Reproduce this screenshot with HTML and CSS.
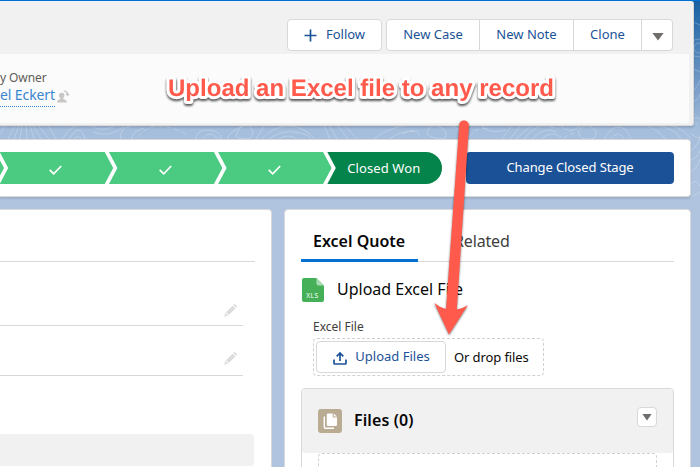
FILE: index.html
```html
<!DOCTYPE html>
<html lang="en">
<head>
<meta charset="utf-8">
<title>Opportunity</title>
<link rel="stylesheet" href="styles.css">
</head>
<body>
<svg class="contours" width="700" height="210" viewBox="0 0 700 210" aria-hidden="true">
  <g fill="none" stroke="#fff" stroke-opacity=".24">
    <path d="M0 134l5-8M8 139l7-14M14 139l5-14M20 139l2-14M27 139l-1-14M34 139l-4-14M41 139l-8-14M49 139l-11-14M56 139l-8-14M63 139q5-12 16-14M69 139q5-8 9-9t7 9M74 139q5-5 7 0M91 125q10 9 27-1M93 132q18 7 33-7M121 139q-3-10 10-13M132 139q0-8 12-11M196 139q1-10 13-9t12 9M203 139q5-10 16 0M227 139q4-10 20-14M236 136q3-10 9-11t8 8q-2 7-9 6t-8-3M256 139l9-14M262 139q10-12 25-13t28 13M269 139q12-9 26-7t16 7M279 139q9-6 18 0M324 125l6 14M329 125l8 14M337 125l11 14M344 125l13 14M374 139q15-12 34-14M389 139q12-9 30-8M428 131q2-8 10-5t8 9-11 3-7-7M453 126l17 12M481 125q8 10 25 5M502 139l10-14M510 139l11-14M516 139l16-14M524 139q15-20 31-11M532 139q12-13 24-7M541 139q10-9 20-2M560 125q10 11 21 0M578 132q5-8 11-6t7 7-6 6-9-2-3-5M604 139q6-11 14-12t13 12M611 139q7-10 13 0M646 125q15 7 19 14M656 125q19 3 25 14M668 125q15 2 23 14"/>
    <path d="M700 39q-10 0-10 9t10 9M700 43q-6 0-6 5t6 5M694 90q4-3 6-10M694 101q5-1 6-7M693 119q4-3 7 0M693 22l7 3M693 69l7 3M691 133q5 6 9 4M691 151q8-7 9-14M691 160q7-2 9-10M691 171q6-2 9-12M691 184q5-6 9 2M691 197l9-5"/>
    <path stroke-dasharray="5 3" d="M138 137q9-12 22-11t26 8M403 135q7-8 17 0M469 137q8-11 18-8M690 115l10 12M563 138l11-5"/>
  </g>
</svg>
<main class="page">
  <header class="record">
    <div class="record-top">
      <button class="btn follow"><svg width="13" height="13" viewBox="0 0 13 13"><path d="M6.5 .5v12M.5 6.5h12" fill="none" stroke="currentColor" stroke-width="1.7"/></svg><span class="t-follow">Follow</span></button>
      <div class="group">
        <button class="btn case">New Case</button>
        <button class="btn note">New Note</button>
        <button class="btn clone">Clone</button>
        <button class="btn more" aria-label="More"><i class="caret"></i></button>
      </div>
    </div>
    <div class="record-fields">
      <div class="field-label">y Owner</div>
      <div class="owner"><a>el Eckert</a><svg width="12" height="13" viewBox="0 0 12 13"><g fill="#c9c7c5"><circle cx="4.7" cy="5.500" r="2.700"/><path d="M3.200 7h3v2l2.700 1.200q.8.4.8 1.200v1.100H.2v-1.100q0-.8.8-1.200L3.200 9z"/></g><path d="M6.700 1.300q3.400-.6 3.900 3.300M9 3.700l1.700 1.600L12 3.600" fill="none" stroke="#c9c7c5" stroke-width="1.300"/></svg></div>
    </div>
  </header>

  <section class="path-card">
    <div class="path">
      <div class="stage"></div>
      <div class="stage"><svg class="check" width="13" height="10" viewBox="0 0 13 10"><path d="M.7 4.800l4 4L12.200 1"/></svg></div>
      <div class="stage"><svg class="check" width="13" height="10" viewBox="0 0 13 10"><path d="M.7 4.800l4 4L12.200 1"/></svg></div>
      <div class="stage"><svg class="check" width="13" height="10" viewBox="0 0 13 10"><path d="M.7 4.800l4 4L12.200 1"/></svg></div>
      <div class="stage won"><span>Closed Won</span></div>
    </div>
    <button class="change"><span>Change Closed Stage</span></button>
  </section>

  <div class="columns">
    <section class="details">
      <div class="tabline"></div>
      <div class="row first"><svg class="pencil" width="13" height="13" viewBox="0 0 13 13"><path d="M.3 12.700l.9-3.700 2.800 2.800zM2 8.300L8.600 1.700l2.800 2.800L4.800 11zM9.300 1l.7-.7q.5-.5 1 0l1.800 1.800q.4.500 0 1l-.7.700z"/></svg></div>
      <div class="row"><svg class="pencil" width="13" height="13" viewBox="0 0 13 13"><path d="M.3 12.700l.9-3.700 2.800 2.800zM2 8.300L8.600 1.700l2.800 2.800L4.800 11zM9.300 1l.7-.7q.5-.5 1 0l1.800 1.800q.4.500 0 1l-.7.700z"/></svg></div>
      <div class="section-bar"></div>
    </section>

    <section class="side">
      <nav class="tabs"><a class="tab active"><span>Excel Quote</span></a><a class="tab"><span>Related</span></a></nav>
      <div class="title">
        <svg width="22" height="24" viewBox="0 0 22 24"><path d="M2 0h12.500L22 7.500V22q0 2-2 2H2q-2 0-2-2V2Q0 0 2 0z" fill="#45b058"/><path d="M14.500 0L22 7.500h-5.500q-2 0-2-2z" fill="#a9dbb2"/><text x="4.200" y="20" textLength="12" font-size="6.500" class="xls">XLS</text></svg>
        <h2>Upload Excel File</h2>
      </div>
      <div class="file-label"><span>Excel File</span></div>
      <div class="dropzone">
        <button class="btn upload"><svg width="14" height="13" viewBox="0 0 14 13"><path d="M1 7.500v3.700q0 .8.800.8h10.400q.8 0 .8-.8V7.500M7 9V1.200M3.700 4.300L7 1l3.300 3.300" fill="none" stroke="currentColor" stroke-width="1.700"/></svg><span>Upload Files</span></button>
        <span class="drop-text">Or drop files</span>
      </div>
      <article class="files">
        <div class="files-head">
          <svg width="24" height="24" viewBox="0 0 24 24"><rect width="24" height="24" rx="3" fill="#baac93"/><path d="M10 4.500h4.700v3.300q0 .8.8.8H19v7.200q0 1.200-1.200 1.200H10q-1.200 0-1.200-1.200V5.700Q8.800 4.500 10 4.500zM15.800 4.500L19 7.600h-3.200z" fill="#fff"/><path d="M6.300 7.500v10.700q0 1 1 1h8.700" fill="none" stroke="#fff" stroke-width="1.400"/></svg>
          <h3>Files (0)</h3>
          <button class="btn files-menu" aria-label="Files menu"><i class="caret"></i></button>
        </div>
        <div class="files-drop"></div>
      </article>
    </section>
  </div>
</main>

<svg class="callout" width="700" height="467" viewBox="0 0 700 467">
  <text x="168" y="96" textLength="386" lengthAdjust="spacingAndGlyphs">Upload an Excel file to any record</text>
  <path d="M459.300 124Q460 120.500 464 120.500T469 125L456.800 309.500Q462 309 467.800 305.300L449 334.500 434.300 303Q440 307.800 446 309z"/>
</svg>
</body>
</html>
```
FILE: styles.css
```css
* { box-sizing: border-box; }

body {
  margin: 0;
  width: 700px;
  height: 467px;
  overflow: hidden;
  position: relative;
  font-family: "Noto Sans", "Open Sans", sans-serif;
  font-size: 13px;
  color: #080707;
  background: linear-gradient(#195f9f 0, #2b6dab 20px, #7197c4 80px, #a5bedc 130px, #b0c4df 200px);
}

h2, h3 { margin: 0; font-weight: 400; }
button { font: inherit; margin: 0; padding: 0; }
svg { display: block; flex: none; }
span, a, h2, h3 { white-space: nowrap; }

.contours { position: absolute; left: 0; top: 0; }

.page {
  position: relative;
  height: 467px;
  overflow: hidden;
  border-top: 1px solid #0070d2;
}

.record {
  width: 694px;
  height: 125px;
  background: #f1f1f1;
  border: 1px solid #d8d8d8;
  border-width: 0 1px 1px 0;
  border-radius: 0 3px 3px 0;
  box-shadow: 0 2px 2px rgba(0, 0, 0, .12);
}

.record-top {
  height: 53px;
  padding: 18px 20px 0 0;
  display: flex;
  justify-content: flex-end;
  gap: 4px;
}

.btn {
  display: flex;
  align-items: center;
  justify-content: center;
  height: 32px;
  padding-bottom: 2px;
  background: #fff;
  border: 1px solid #d8d8d8;
  border-radius: 4px;
  color: #1b5297;
  line-height: 18px;
  white-space: nowrap;
}

.follow { width: 95px; gap: 9px; }
.follow svg { margin-top: 2px; }
.group { display: flex; }
.group .btn { border-radius: 0; border-left-width: 0; }
.group .case { width: 94px; border-left-width: 1px; border-radius: 4px 0 0 4px; }
.group .note { width: 94px; }
.group .clone { width: 68px; }
.group .more { width: 31px; border-radius: 0 4px 4px 0; }

.caret {
  width: 12px;
  height: 8px;
  background: #706e6b;
  clip-path: polygon(0 0, 100% 0, 50% 100%);
}
.more .caret { margin: 5px 0 0 2px; }

.record-fields {
  width: 689px;
  height: 69px;
  padding-top: 15px;
  background: #fbfbfb;
  border-radius: 0 0 3px 0;
}
.field-label { font-size: 12px; line-height: 18px; color: #5f5d5a; letter-spacing: -.1px; }
.owner { display: flex; gap: 2px; }
.owner a {
  height: 20px;
  line-height: 16px;
  font-size: 14px;
  letter-spacing: -.1px;
  color: #3a86cf;
  border-bottom: 1px dotted #3a86cf;
}
.owner svg { margin-top: 3px; }

.path-card {
  width: 691px;
  height: 58px;
  margin-top: 13px;
  padding-top: 12px;
  display: flex;
  background: #fff;
  border: 1px solid #d8d8d8;
  border-left: 0;
  border-radius: 0 4px 4px 0;
  box-shadow: 0 2px 2px rgba(0, 0, 0, .1);
}

.path { display: flex; width: 442px; height: 32px; margin-right: 24px; flex: none; }
.stage {
  flex: none;
  width: 113.5px;
  height: 32px;
  margin-right: -4.300px;
  display: flex;
  align-items: center;
  justify-content: center;
  background: #4bca81;
  clip-path: polygon(0 0, 105px 0, 100% 50%, 105px 100%, 0 100%, 8.500px 50%);
}
.stage:first-child { margin-left: -109.500px; }
.check { margin: 3px 1px 0 0; }
.check path { fill: none; stroke: #fff; stroke-width: 1.700; }
.stage.won {
  width: 115px;
  margin-right: 0;
  padding-right: 2px;
  letter-spacing: .1px;
  background: #04844b;
  color: #fff;
  border-radius: 0 16px 16px 0;
  clip-path: polygon(0 0, 100% 0, 100% 100%, 0 100%, 8.500px 50%);
}
.change {
  width: 208px;
  height: 32px;
  padding-bottom: 2px;
  flex: none;
  border: 0;
  border-radius: 4px;
  background: #1b5297;
  color: #fff;
  letter-spacing: -.1px;
}

.columns { display: flex; gap: 12px; margin-top: 12px; height: 280px; }
.details, .side { background: #fff; border: 1px solid #d8d8d8; }
.details { width: 272px; border-left: 0; border-radius: 0 4px 0 0; }
.tabline { width: 255px; height: 52px; border-bottom: 1px solid #d8d8d8; }
.row {
  width: 243px;
  height: 50px;
  border-bottom: 1px solid #d8d8d8;
  padding: 26px 6px 0 0;
  display: flex;
  justify-content: flex-end;
}
.row.first { height: 64px; padding-top: 42px; }
.pencil path { fill: #dddbda; }
.section-bar { width: 254px; height: 32px; margin-top: 58px; background: #f1f1f1; border-radius: 0 4px 4px 0; }

.side { width: 407px; border-radius: 4px 4px 0 0; padding: 0 16px; }
.tabs { display: flex; height: 52px; border-bottom: 1px solid #d8d8d8; font-size: 16px; }
.tab { padding: 20px 12px 0; height: 52px; line-height: 22px; color: #3e3e3c; letter-spacing: -.15px; }
.tab.active { width: 117px; margin-right: 24px; font-weight: 600; letter-spacing: 0; color: #080707; border-bottom: 3px solid #0070d2; }
.title { display: flex; gap: 13px; height: 57px; padding: 16px 0 0 1px; }
.title h2 { font-size: 16px; line-height: 23px; }
.xls { fill: #fff; font-family: "Noto Sans", sans-serif; }
.file-label { padding-left: 12px; font-size: 12px; line-height: 16px; height: 19px; color: #3e3e3c; }
.dropzone {
  width: 231px;
  height: 38px;
  margin-left: 12px;
  padding: 2px;
  display: flex;
  align-items: center;
  gap: 8px;
  border: 1px dashed #d3d1d0;
  border-radius: 4px;
}
.drop-text { letter-spacing: -.1px; }
.upload { width: 130px; gap: 8px; flex: none; padding-left: 1px; }
.upload svg { margin-top: 4px; }
.files { width: 373px; margin-top: 12px; height: 100px; border: 1px solid #d8d8d8; border-radius: 4px; }
.files-head {
  height: 64px;
  padding: 0 16px;
  display: flex;
  align-items: center;
  background: #f1f1f1;
  border-radius: 3px;
}
.files-head h3 { margin: 0 0 2px 12px; font-size: 16px; font-weight: 600; line-height: 22px; letter-spacing: .1px; }
.files-menu { width: 20px; height: 20px; margin: -9px 0 0 auto; padding: 0; }
.files-menu .caret { width: 10px; height: 7px; margin-top: 1px; }
.files-drop { height: 40px; margin: 0 16px; border: 1px dashed #d3d1d0; border-radius: 4px; }

.callout {
  position: absolute;
  left: 0;
  top: 0;
  pointer-events: none;
}
.callout text {
  font: bold 24px "Liberation Sans", Arial, sans-serif;
  fill: #ff5a4c;
  stroke: #fff;
  stroke-width: 6px;
  stroke-linejoin: round;
  paint-order: stroke;
  text-rendering: geometricPrecision;
  filter: drop-shadow(0 2px 1px rgba(0, 0, 0, .65));
}
.callout path { fill: #ff5a4c; filter: drop-shadow(0 1px 1px rgba(0, 0, 0, .5)); }
```
